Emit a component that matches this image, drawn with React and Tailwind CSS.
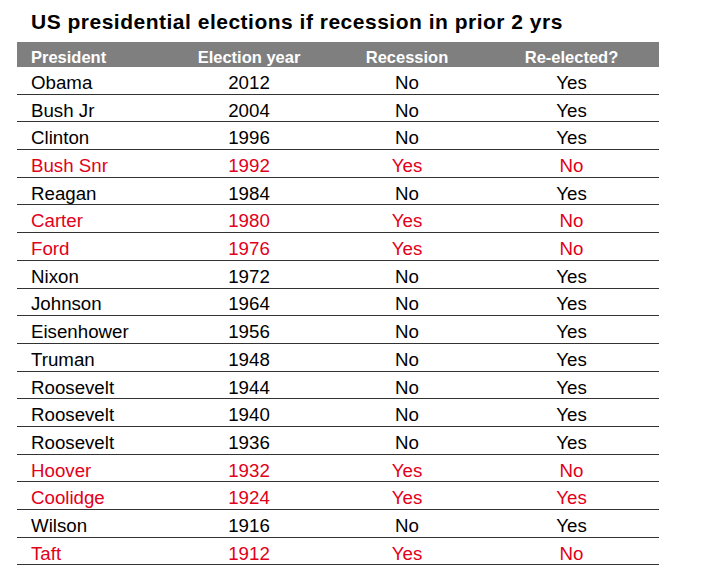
const ROWS = [
  ['Obama', '2012', 'No', 'Yes', false],
  ['Bush Jr', '2004', 'No', 'Yes', false],
  ['Clinton', '1996', 'No', 'Yes', false],
  ['Bush Snr', '1992', 'Yes', 'No', true],
  ['Reagan', '1984', 'No', 'Yes', false],
  ['Carter', '1980', 'Yes', 'No', true],
  ['Ford', '1976', 'Yes', 'No', true],
  ['Nixon', '1972', 'No', 'Yes', false],
  ['Johnson', '1964', 'No', 'Yes', false],
  ['Eisenhower', '1956', 'No', 'Yes', false],
  ['Truman', '1948', 'No', 'Yes', false],
  ['Roosevelt', '1944', 'No', 'Yes', false],
  ['Roosevelt', '1940', 'No', 'Yes', false],
  ['Roosevelt', '1936', 'No', 'Yes', false],
  ['Hoover', '1932', 'Yes', 'No', true],
  ['Coolidge', '1924', 'Yes', 'Yes', true],
  ['Wilson', '1916', 'No', 'Yes', false],
  ['Taft', '1912', 'Yes', 'No', true],
];

const COLS = 'grid grid-cols-[151px_162px_154px_175px]';

export default function App() {
  return (
    <div className="h-[570px] w-[720px] overflow-hidden bg-white font-['Liberation_Sans',Arial,sans-serif]">
      <h1 className="pl-[31px] pt-[9px] text-[21px] font-bold leading-[26px] tracking-[0.5px] text-black">
        US presidential elections if recession in prior 2 yrs
      </h1>
      <div className="ml-[17px] mt-[7px] w-[642px]">
        <div className={`${COLS} h-[25px] items-center bg-[#7f7f7f] pt-[5px] text-[16.5px] font-bold leading-none text-white`}>
          <div className="pl-[14px]">President</div>
          <div className="text-center">Election year</div>
          <div className="text-center">Recession</div>
          <div className="text-center">Re-elected?</div>
        </div>
        {ROWS.map(([name, year, rec, re, red], i) => (
          <div
            key={i}
            className={`${COLS} h-[27.7px] items-center border-b-[1.5px] border-[#333333] pt-[6px] text-[18.7px] leading-none ${
              red ? 'text-[#e2001a]' : 'text-black'
            }`}
          >
            <div className="pl-[14px]">{name}</div>
            <div className="text-center">{year}</div>
            <div className="text-center">{rec}</div>
            <div className="text-center">{re}</div>
          </div>
        ))}
      </div>
    </div>
  );
}
